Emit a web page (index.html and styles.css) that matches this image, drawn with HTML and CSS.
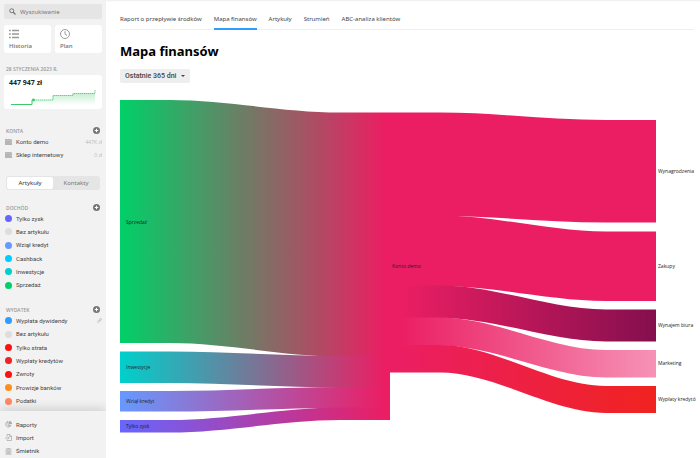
FILE: index.html
```html
<!DOCTYPE html>
<html lang="pl">
<head>
<meta charset="utf-8">
<title>Mapa finansów</title>
<link rel="stylesheet" href="styles.css">
</head>
<body>
<div class="app">
  <aside class="sidebar">
    <div class="side-main">
      <label class="search">
        <svg class="search-icon" viewBox="0 0 14 14" aria-hidden="true"><circle cx="5.5" cy="5.5" r="4" fill="none" stroke="currentColor" stroke-width="2"/><path d="M8.5 8.5 13 13" stroke="currentColor" stroke-width="2.4"/></svg>
        <input type="search" placeholder="Wyszukiwanie" aria-label="Wyszukiwanie">
      </label>

      <div class="tiles">
        <button class="tile" type="button">
          <svg viewBox="0 0 20 20" aria-hidden="true"><path d="M6 3h14M6 10h14M6 17h14M0 3h3.500M0 10h3.500M0 17h3.500" stroke="currentColor" stroke-width="2.600"/></svg>
          <span>Historia</span>
        </button>
        <button class="tile" type="button">
          <svg viewBox="0 0 20 20" aria-hidden="true"><circle cx="10" cy="10" r="9" fill="none" stroke="currentColor" stroke-width="2"/><path d="M10 4.500V10l4 3" fill="none" stroke="currentColor" stroke-width="2"/></svg>
          <span>Plan</span>
        </button>
      </div>

      <h2 class="caption">28 styczenia 2023 r.</h2>
      <div class="balance">
        <strong>447 947 zł</strong>
        <svg class="spark" viewBox="0 0 86 17" aria-hidden="true">
          <defs><linearGradient id="fade" x1="0" y1="0" x2="0" y2="1"><stop offset="0" stop-color="#3fca69" stop-opacity=".3"/><stop offset="1" stop-color="#3fca69" stop-opacity="0"/></linearGradient></defs>
          <path d="M22 10h21V5.500h20v-2h22V15H22z" fill="url(#fade)"/>
          <path d="M1 14.500h21V10" fill="none" stroke="#3fca69"/>
          <path d="M22 10h21V5.500h20v-2h22V0" fill="none" stroke="#3fca69" stroke-opacity=".8" stroke-dasharray="1.500 .5"/>
          <circle cx="23.500" cy="10" r="1.400" fill="#3fca69"/>
        </svg>
      </div>

      <section class="group accounts">
        <header><h2>Konta</h2><button class="add" type="button" aria-label="Dodaj konto"><svg viewBox="0 0 14 14"><circle cx="7" cy="7" r="7"/><path d="M7 3.500v7M3.500 7h7"/></svg></button></header>
        <ul>
          <li><svg class="wallet" viewBox="0 0 14 12" aria-hidden="true"><path d="M0 0h13v2h1v10H0z" fill="#b5b5b5"/><path d="M0 2.500h13M10 7h4" stroke="#ccc"/></svg><a href="#">Konto demo</a><span class="sum">447K zł</span></li>
          <li><svg class="wallet" viewBox="0 0 14 12" aria-hidden="true"><path d="M0 0h13v2h1v10H0z" fill="#b5b5b5"/><path d="M0 2.500h13M10 7h4" stroke="#ccc"/></svg><a href="#">Sklep internetowy</a><span class="sum">0 zł</span></li>
        </ul>
      </section>

      <div class="switch">
        <button class="on" type="button">Artykuły</button>
        <button type="button">Kontakty</button>
      </div>

      <section class="group income">
        <header><h2>Dochód</h2><button class="add" type="button" aria-label="Dodaj dochód"><svg viewBox="0 0 14 14"><circle cx="7" cy="7" r="7"/><path d="M7 3.500v7M3.500 7h7"/></svg></button></header>
        <ul>
          <li><i class="dot violet"></i><a href="#">Tylko zysk</a></li>
          <li><i class="dot grey"></i><a href="#">Bez artykułu</a></li>
          <li><i class="dot blue"></i><a href="#">Wziął kredyt</a></li>
          <li><i class="dot cyan"></i><a href="#">Cashback</a></li>
          <li><i class="dot teal"></i><a href="#">Inwestycje</a></li>
          <li><i class="dot green"></i><a href="#">Sprzedaż</a></li>
        </ul>
      </section>

      <section class="group expense">
        <header><h2>Wydatek</h2><button class="add" type="button" aria-label="Dodaj wydatek"><svg viewBox="0 0 14 14"><circle cx="7" cy="7" r="7"/><path d="M7 3.500v7M3.500 7h7"/></svg></button></header>
        <ul>
          <li><i class="dot sky"></i><a href="#">Wypłata dywidendy</a><svg class="clip" viewBox="0 0 10 10" aria-hidden="true"><path d="M4 6 7 3M5 2l1-1q1.500-.5 3 1 .5 1-.5 2L6 6.500q-1 .5-2 0M6 4Q5 3 4 3.500L1.500 6q-1 1 0 2.500 1.500 1 2.500 0l1-1" fill="none" stroke="#b0b0b0" stroke-width="1.200"/></svg></li>
          <li><i class="dot grey"></i><a href="#">Bez artykułu</a></li>
          <li><i class="dot red"></i><a href="#">Tylko strata</a></li>
          <li><i class="dot crimson"></i><a href="#">Wypłaty kredytów</a></li>
          <li><i class="dot red"></i><a href="#">Zwroty</a></li>
          <li><i class="dot orange"></i><a href="#">Prowizje banków</a></li>
          <li><i class="dot salmon"></i><a href="#">Podatki</a></li>
        </ul>
      </section>
    </div>

    <nav class="side-foot">
      <ul>
        <li><svg viewBox="0 0 14 14" aria-hidden="true"><path d="M6 1a5.500 5.500 0 1 0 6 7.500H6z" fill="none" stroke="#aaa" stroke-width="2"/><path d="M8 0a6 6 0 0 1 6 6H8z" fill="#aaa"/></svg><a href="#">Raporty</a></li>
        <li><svg viewBox="0 0 14 14" aria-hidden="true"><path d="M4 5V1h6l3 3v9H4v-2" fill="none" stroke="#aaa" stroke-width="1.500"/><path d="M0 8h8M6 5.500 8.500 8 6 10.500M9 1v4h4" fill="none" stroke="#aaa" stroke-width="1.500"/></svg><a href="#">Import</a></li>
        <li><svg viewBox="0 0 14 14" aria-hidden="true"><path d="M1 2h12M5 1h4" stroke="#aaa" stroke-width="1.500"/><path d="M2 4h10v9.500H2zM5 6v6M7 6v6M9 6v6" fill="#ddd" stroke="#aaa"/></svg><a href="#">Śmietnik</a></li>
      </ul>
    </nav>
  </aside>

  <main class="content">
    <nav class="tabs">
      <a href="#">Raport o przepływie środków</a>
      <a href="#" class="current" aria-current="page">Mapa finansów</a>
      <a href="#">Artykuły</a>
      <a href="#">Strumień</a>
      <a href="#">ABC-analiza klientów</a>
    </nav>
    <h1>Mapa finansów</h1>
    <button class="period" type="button">Ostatnie 365 dni <span class="caret"></span></button>

    <svg class="sankey" viewBox="0 0 574 340" role="img" aria-label="Mapa finansów">
      <defs>
        <linearGradient id="g1"><stop offset="0" stop-color="#00d068"/><stop offset=".98" stop-color="#eb1e63"/></linearGradient>
        <linearGradient id="g2"><stop offset="0" stop-color="#00d0cc"/><stop offset=".98" stop-color="#eb1e63"/></linearGradient>
        <linearGradient id="g3"><stop offset="0" stop-color="#6699ff"/><stop offset=".98" stop-color="#eb1e63"/></linearGradient>
        <linearGradient id="g4"><stop offset="0" stop-color="#6666ff"/><stop offset=".98" stop-color="#eb1e63"/></linearGradient>
        <linearGradient id="g5"><stop offset=".04" stop-color="#eb1e63"/><stop offset="1" stop-color="#850f4e"/></linearGradient>
        <linearGradient id="g6"><stop offset=".04" stop-color="#eb1e63"/><stop offset="1" stop-color="#f692b5"/></linearGradient>
        <linearGradient id="g7"><stop offset=".04" stop-color="#eb1e63"/><stop offset="1" stop-color="#f02320"/></linearGradient>
      </defs>
      <path fill="url(#g1)" d="M0 4H50C107 4 163 16.500 220 16.500H270V260.500H220C163 260.500 107 247 50 247H0z"/>
      <path fill="url(#g2)" d="M0 255.500H50C107 255.500 163 260 220 260H270V291.500H220C163 291.500 107 287 50 287H0z"/>
      <path fill="url(#g3)" d="M0 295H50C107 295 163 291 220 291H270V312H220C163 312 107 315.500 50 315.500H0z"/>
      <path fill="url(#g4)" d="M0 324H50C107 324 163 311.500 220 311.500H270V324H220C163 324 107 336.500 50 336.500H0z"/>
      <path fill="#eb1e63" d="M270 16.500H320C375 16.500 431 24 486 24H536V126.500H486C431 126.500 375 120 320 120H270z"/>
      <path fill="#eb1e63" d="M270 119.500H320C375 119.500 431 135.500 486 135.500H536V205H486C431 205 375 190 320 190H270z"/>
      <path fill="url(#g5)" d="M270 189.500H320C375 189.500 431 213.500 486 213.500H536V245.500H486C431 245.500 375 222 320 222H270z"/>
      <path fill="url(#g6)" d="M270 221.500H320C375 221.500 431 254 486 254H536V281.500H486C431 281.500 375 249.500 320 249.500H270z"/>
      <path fill="url(#g7)" d="M270 249H320C375 249 431 290 486 290H536V317H486C431 317 375 276.500 320 276.500H270z"/>
      <g class="labels">
        <text x="6" y="128">Sprzedaż</text>
        <text x="6" y="273">Inwestycje</text>
        <text x="6" y="307">Wziął kredyt</text>
        <text x="6" y="332">Tylko zysk</text>
        <text x="272" y="172">Konto demo</text>
        <text x="538" y="77">Wynagrodzenia</text>
        <text x="538" y="172">Zakupy</text>
        <text x="538" y="231">Wynajem biura</text>
        <text x="538" y="269">Marketing</text>
        <text x="538" y="305">Wypłaty kredytó</text>
      </g>
    </svg>
  </main>
</div>
</body>
</html>
```
FILE: styles.css
```css
* { box-sizing: border-box; }

body {
  margin: 0;
  background: #fff;
  color: #444;
  font: 6px/8px Roboto, "Noto Sans", sans-serif;
}

h1, h2, ul { margin: 0; padding: 0; }
ul { list-style: none; }
a { color: inherit; text-decoration: none; }
button, input { font: inherit; color: inherit; border: 0; padding: 0; margin: 0; background: none; }

.app {
  display: flex;
  height: 100vh;
  overflow: hidden;
}

/* Sidebar */
.sidebar {
  display: flex;
  flex-direction: column;
  flex: 0 0 106px;
  overflow: hidden;
  background: #f2f2f2;
}

.side-main {
  flex: 1;
  min-height: 0;
  overflow: hidden;
  padding: 4px 4px 0;
}

.search {
  display: flex;
  align-items: center;
  gap: 4px;
  height: 15px;
  padding: 0 5px;
  border-radius: 2px;
  background: #e5e5e5;
  color: #777;
}
.search-icon { width: 7px; height: 7px; }
.search input { flex: 1; min-width: 0; font-family: "Noto Sans", sans-serif; outline: 0; appearance: none; }
.search input::placeholder { color: #777; opacity: 1; }

.tiles { display: flex; gap: 4px; margin-top: 6px; }
.tile {
  flex: 1;
  display: flex;
  flex-direction: column;
  align-items: flex-start;
  gap: 3px;
  height: 28px;
  padding: 4px 5px 2px;
  border-radius: 3px;
  background: #fff;
  color: #777;
  font-family: "Open Sans", sans-serif;
  font-weight: 600;
}
.tile svg { width: 10px; height: 10px; color: #999; }

.caption, .group h2 {
  color: #999;
  font-family: "Open Sans", sans-serif;
  font-size: 5px;
  font-weight: 600;
  line-height: 8px;
  text-transform: uppercase;
}
.caption { margin: 12px 2px 2px; }

.balance {
  height: 34px;
  padding: 4px 5px 0;
  border-radius: 3px;
  background: #fff;
}
.balance strong { display: block; color: #222; font-family: "Open Sans", sans-serif; font-size: 7px; font-weight: 700; }
.spark { display: block; width: 100%; height: 17px; margin-top: 3px; }

.group { margin-top: 13px; }
.group header {
  display: flex;
  align-items: center;
  justify-content: space-between;
  height: 9px;
  padding: 0 2px;
}
.add, .add svg { display: block; width: 7px; height: 7px; }
.add circle { fill: #777; }
.add path { stroke: #fff; stroke-width: 2; }

.sidebar ul { display: grid; grid-auto-rows: 1fr; }
.sidebar li {
  display: flex;
  align-items: center;
  gap: 4px;
  padding-left: 1px;
}
.accounts { margin-top: 17px; }
.accounts ul { height: 27px; }
.income ul { height: 80px; }
.expense ul { height: 94px; }
.wallet { width: 7px; height: 6px; }
.sum { margin-left: auto; color: #bbb; font-family: "Open Sans", sans-serif; font-size: 5px; }
.clip { width: 5px; height: 5px; margin-left: auto; }

.switch {
  display: flex;
  height: 14px;
  margin: 14px 2px 0;
  padding: 1px;
  border-radius: 3px;
  background: #e5e5e5;
  font-family: "Noto Sans", sans-serif;
}
.switch button { flex: 1; border-radius: 2px; color: #777; }
.switch .on { background: #fff; color: #333; }

.dot { width: 7px; height: 7px; border-radius: 50%; }
.violet { background: #6666ff; }
.grey { background: #ddd; }
.blue { background: #6699ff; }
.cyan { background: #00ccff; }
.teal { background: #00d0cc; }
.green { background: #00d068; }
.sky { background: #2f9dff; }
.red { background: #ff1010; }
.crimson { background: #f02320; }
.orange { background: #ff8f1c; }
.salmon { background: #ff8866; }

.side-foot {
  position: relative;
  padding: 7px 4px 0;
  background: #f2f2f2;
  box-shadow: 0 -2px 10px rgba(0, 0, 0, .16);
}
.side-foot ul { height: 40px; }
.side-foot svg { width: 7px; height: 7px; }

/* Report */
.content {
  flex: 1;
  min-width: 0;
  padding: 0 6px 0 14px;
  box-shadow: inset 0 2px 2px -1px #eee;
}

.tabs {
  display: flex;
  gap: 12px;
  padding-top: 13px;
  border-bottom: 1px solid #eee;
  font-family: "Noto Sans", sans-serif;
}
.tabs a { padding: 2px 0 5px; margin-bottom: -1px; border-bottom: 2px solid transparent; }
.tabs .current { border-color: #2f9dff; }

h1 {
  margin-top: 12px;
  color: #000;
  font-family: "Noto Sans", sans-serif;
  font-size: 13px;
  font-weight: 700;
  line-height: 18px;
}

.period {
  display: flex;
  align-items: center;
  gap: 5px;
  height: 14px;
  margin-top: 9px;
  padding: 0 5px;
  border-radius: 2px;
  background: #eee;
  font-size: 7px;
  font-weight: 500;
}
.caret { border: 2px solid transparent; border-top-color: #444; border-bottom: 0; }

.sankey { display: block; width: 100%; height: auto; margin-top: 13px; overflow: visible; }
.labels { fill: #222; font-family: "Open Sans", sans-serif; font-size: 5px; }
```
